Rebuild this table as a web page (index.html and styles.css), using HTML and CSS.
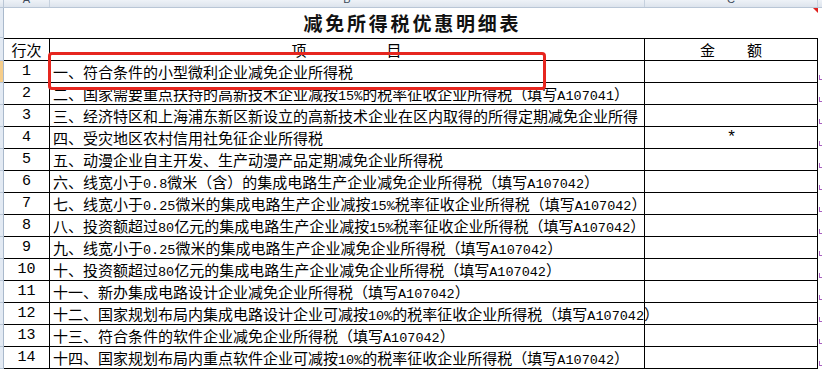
FILE: index.html
```html
<!DOCTYPE html>
<html lang="zh-CN">
<head>
<meta charset="utf-8">
<title>减免所得税优惠明细表</title>
<link rel="stylesheet" href="styles.css">
</head>
<body>
<div class="colhead">
  <div class="ch-corner"></div>
  <div class="ch ch-a"><span>A</span></div>
  <div class="ch ch-b"><span>B</span></div>
  <div class="ch ch-c"><span>C</span></div>
  <div class="ch-rest"></div>
</div>
<div class="sheet">
  <div class="row title-row">
    <div class="rh"></div>
    <div class="title"><span class="title-text">减免所得税优惠明细表</span><span class="comment"></span></div>
    <div class="rest"></div>
  </div>
  <div class="row head">
    <div class="rh"></div>
    <div class="c1">行次</div>
    <div class="c2 spread-b"><span>项</span><span>目</span></div>
    <div class="c3 spread-c"><span>金</span><span>额</span></div>
    <div class="rest"></div>
  </div>
  <div class="row">
    <div class="rh sel"></div>
    <div class="c1 num">1</div>
    <div class="c2">一、符合条件的小型微利企业减免企业所得税</div>
    <div class="c3"></div>
    <div class="rest"><i class="mark"></i></div>
  </div>
  <div class="row">
    <div class="rh"></div>
    <div class="c1 num">2</div>
    <div class="c2">二、国家需要重点扶持的高新技术企业减按<span class="m">15%</span>的税率征收企业所得税（填写<span class="m">A107041</span>）</div>
    <div class="c3"></div>
    <div class="rest"><i class="mark"></i></div>
  </div>
  <div class="row">
    <div class="rh"></div>
    <div class="c1 num">3</div>
    <div class="c2 wrap">三、经济特区和上海浦东新区新设立的高新技术企业在区内取得的所得定期减免企业所得税</div>
    <div class="c3"></div>
    <div class="rest"><i class="mark"></i></div>
  </div>
  <div class="row">
    <div class="rh"></div>
    <div class="c1 num">4</div>
    <div class="c2">四、受灾地区农村信用社免征企业所得税</div>
    <div class="c3 star">*</div>
    <div class="rest"><i class="mark"></i></div>
  </div>
  <div class="row">
    <div class="rh"></div>
    <div class="c1 num">5</div>
    <div class="c2">五、动漫企业自主开发、生产动漫产品定期减免企业所得税</div>
    <div class="c3"></div>
    <div class="rest"><i class="mark"></i></div>
  </div>
  <div class="row">
    <div class="rh"></div>
    <div class="c1 num">6</div>
    <div class="c2">六、线宽小于<span class="m">0.8</span>微米（含）的集成电路生产企业减免企业所得税（填写<span class="m">A107042</span>）</div>
    <div class="c3"></div>
    <div class="rest"><i class="mark"></i></div>
  </div>
  <div class="row">
    <div class="rh"></div>
    <div class="c1 num">7</div>
    <div class="c2">七、线宽小于<span class="m">0.25</span>微米的集成电路生产企业减按<span class="m">15%</span>税率征收企业所得税（填写<span class="m">A107042</span>）</div>
    <div class="c3"></div>
    <div class="rest"><i class="mark"></i></div>
  </div>
  <div class="row">
    <div class="rh"></div>
    <div class="c1 num">8</div>
    <div class="c2">八、投资额超过<span class="m">80</span>亿元的集成电路生产企业减按<span class="m">15%</span>税率征收企业所得税（填写<span class="m">A107042</span>）</div>
    <div class="c3"></div>
    <div class="rest"><i class="mark"></i></div>
  </div>
  <div class="row">
    <div class="rh"></div>
    <div class="c1 num">9</div>
    <div class="c2">九、线宽小于<span class="m">0.25</span>微米的集成电路生产企业减免企业所得税（填写<span class="m">A107042</span>）</div>
    <div class="c3"></div>
    <div class="rest"><i class="mark"></i></div>
  </div>
  <div class="row">
    <div class="rh"></div>
    <div class="c1 num">10</div>
    <div class="c2">十、投资额超过<span class="m">80</span>亿元的集成电路生产企业减免企业所得税（填写<span class="m">A107042</span>）</div>
    <div class="c3"></div>
    <div class="rest"><i class="mark"></i></div>
  </div>
  <div class="row">
    <div class="rh"></div>
    <div class="c1 num">11</div>
    <div class="c2">十一、新办集成电路设计企业减免企业所得税（填写<span class="m">A107042</span>）</div>
    <div class="c3"></div>
    <div class="rest"><i class="mark"></i></div>
  </div>
  <div class="row">
    <div class="rh"></div>
    <div class="c1 num">12</div>
    <div class="c2">十二、国家规划布局内集成电路设计企业可减按<span class="m">10%</span>的税率征收企业所得税（填写<span class="m">A107042</span>）</div>
    <div class="c3"></div>
    <div class="rest"><i class="mark"></i></div>
  </div>
  <div class="row">
    <div class="rh"></div>
    <div class="c1 num">13</div>
    <div class="c2">十三、符合条件的软件企业减免企业所得税（填写<span class="m">A107042</span>）</div>
    <div class="c3"></div>
    <div class="rest"><i class="mark"></i></div>
  </div>
  <div class="row">
    <div class="rh"></div>
    <div class="c1 num">14</div>
    <div class="c2">十四、国家规划布局内重点软件企业可减按<span class="m">10%</span>的税率征收企业所得税（填写<span class="m">A107042</span>）</div>
    <div class="c3"></div>
    <div class="rest"><i class="mark"></i></div>
  </div>
  <div class="highlight"></div>
</div>
</body>
</html>
```

FILE: styles.css
```css
* { box-sizing: border-box; }

html, body {
  margin: 0;
  padding: 0;
  background: #fff;
}

body {
  width: 822px;
  height: 370px;
  overflow: hidden;
  font-family: "Noto Sans CJK SC", sans-serif;
  font-size: 15px;
  color: #000;
}

.m {
  font-family: "Liberation Mono", "Noto Sans CJK SC", monospace;
  font-size: 13.5px;
}

/* column header strip */
.colhead {
  display: flex;
  height: 8px;
  overflow: hidden;
  background: linear-gradient(#eef2f7, #dde4ed);
  border-bottom: 1px solid #b9c6d6;
}

.ch-corner {
  width: 4px;
  border-right: 1px solid #b9c6d6;
}

.ch {
  display: flex;
  justify-content: center;
  border-right: 1px solid #c6d1de;
  font-family: "Liberation Sans", sans-serif;
  font-size: 11px;
  color: #3d4a5a;
}

.ch span {
  display: block;
  line-height: 11px;
  margin-top: -6px;
}

.ch-a { width: 46px; }
.ch-b { width: 595px; }
.ch-c { width: 173px; }
.ch-rest { flex: 1; }

/* sheet */
.sheet {
  position: relative;
}

.row {
  display: flex;
  height: 22px;
}

.rh {
  width: 4px;
  flex: none;
  background: #e3eaf3;
  border-right: 1px solid #a9b9cc;
  border-bottom: 1px solid #b9c6d6;
}

.rh.sel {
  background: #f6cd8a;
}

.c1, .c2, .c3 {
  flex: none;
  border-right: 1px solid #000;
  border-bottom: 1px solid #000;
  line-height: 21px;
  white-space: nowrap;
}

.c1 {
  width: 46px;
  text-align: center;
}

.c1.num {
  font-family: "Liberation Mono", monospace;
  font-size: 15px;
}

.c2 {
  width: 595px;
  padding-left: 3px;
}

.c3 {
  width: 173px;
}

.c2.wrap {
  white-space: normal;
  overflow: hidden;
  height: 22px;
}

.c3.star {
  text-align: center;
  padding-left: 1px;
  font-family: "Liberation Mono", monospace;
  font-size: 17px;
}

.rest {
  flex: 1;
  display: flex;
  align-items: flex-end;
  padding-bottom: 3px;
}

.mark {
  display: block;
  width: 3px;
  height: 5px;
  margin-left: 1px;
  border-left: 1px solid #a85fbf;
  border-bottom: 1px solid #a85fbf;
}

/* title row */
.title-row {
  height: 30px;
}

.title {
  position: relative;
  width: 814px;
  flex: none;
  display: flex;
  align-items: center;
  justify-content: center;
}

.title-text {
  font-size: 19px;
  font-weight: 700;
  letter-spacing: 2.8px;
  padding-left: 2.8px;
  line-height: 30px;
  color: #111;
}

.comment {
  position: absolute;
  top: 0;
  right: 0;
  width: 0;
  height: 0;
  border-top: 5px solid #e0201c;
  border-left: 5px solid transparent;
}

/* header row */
.head {
  height: 23px;
}

.head .c1, .head .c2, .head .c3 {
  border-top: 1px solid #000;
}

.spread-b {
  display: flex;
  justify-content: center;
  gap: 80px;
  padding-left: 0;
  padding-right: 1px;
}

.spread-c {
  display: flex;
  justify-content: center;
  gap: 32px;
}

/* red highlight frame */
.highlight {
  position: absolute;
  left: 48px;
  top: 44px;
  width: 498px;
  height: 38px;
  border: 3px solid #e6261f;
  border-radius: 4px;
}
```
